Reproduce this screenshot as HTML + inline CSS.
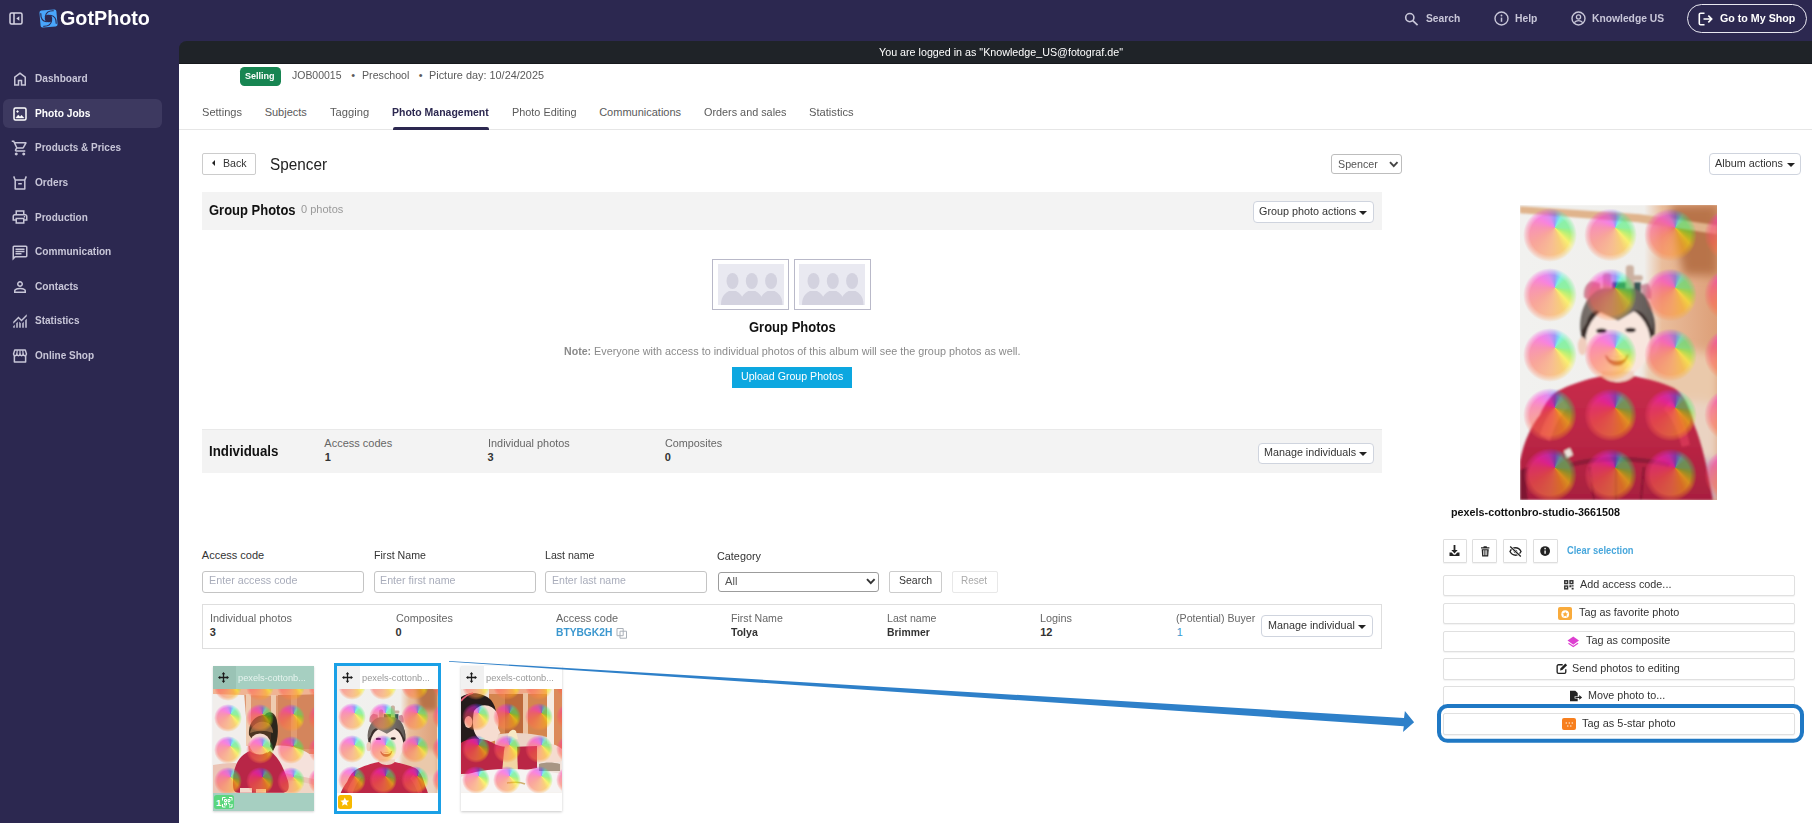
<!DOCTYPE html>
<html lang="en"><head><meta charset="utf-8"><title>GotPhoto - Photo Management</title>
<style>

*{box-sizing:border-box;margin:0;padding:0}
html,body{width:1812px;height:823px;overflow:hidden}
body{background:#2c2850;font-family:"Liberation Sans",sans-serif;position:relative}
.t{position:absolute;white-space:pre;line-height:1;transform-origin:0 50%;display:block}
.abs{position:absolute}
#main{position:absolute;left:179px;top:41px;width:1633px;height:782px;background:linear-gradient(to bottom,#1f2328 0,#1f2328 22px,#16191d 22px,#16191d 23px,#fff 23px);border-top-left-radius:7.5px;overflow:hidden}
.btn{position:absolute;background:#fff;border:1px solid #cfd4de;border-radius:4px}
.inp{position:absolute;background:#fff;border:1px solid #c4c4c4;border-radius:3px}
.bar{position:absolute;background:#f3f3f3}
.caret{position:absolute;width:0;height:0;border-left:4px solid transparent;border-right:4px solid transparent;border-top:4.4px solid #222;margin-left:-.4px}
svg{position:absolute;overflow:visible}


.ph{position:absolute;overflow:hidden}
.wm{position:absolute;display:block;border-radius:50%;background:conic-gradient(from 0deg at 59% 36.5%,#5848ff 0deg,#20a0ff 15deg,#20f0d0 30deg,#30f068 58deg,#38f060 90deg,#60f020 106deg,#b0f000 124deg,#fff000 138deg,#ffb010 160deg,#ff9040 190deg,#ff6050 235deg,#ff4080 270deg,#ff20d0 300deg,#d030f0 330deg,#8040f8 350deg,#5848ff 360deg);opacity:.52;
-webkit-mask-image:radial-gradient(circle closest-side,#000 74%,rgba(0,0,0,.5) 89%,transparent 100%);mask-image:radial-gradient(circle closest-side,#000 74%,rgba(0,0,0,.5) 89%,transparent 100%)}

</style></head>
<body>

<div id="main"></div>
<!-- sidebar active -->
<div class="abs" style="left:3px;top:99.2px;width:158.7px;height:28.6px;border-radius:6px;background:#3d3960"></div>
<!-- header -->
<div class="abs" style="left:239.8px;top:67px;width:41.2px;height:18.7px;border-radius:4.5px;background:#178552"></div>
<div class="abs" style="left:179px;top:129px;width:1633px;height:1px;background:#e6e6e6"></div>
<div class="abs" style="left:392.6px;top:126.6px;width:96.1px;height:3.2px;border-radius:2px 2px 0 0;background:#2c2850"></div>
<!-- back -->
<div class="btn" style="left:202px;top:153px;width:54px;height:22px;border-color:#ccc;border-radius:2px"></div>
<div class="abs" style="left:211.6px;top:160.2px;width:0;height:0;border-top:3.4px solid transparent;border-bottom:3.4px solid transparent;border-right:3.6px solid #222"></div>
<!-- spencer select -->
<div class="inp" style="left:1331.2px;top:154.1px;width:70.4px;height:19.6px;border-color:#bdbdbd"></div>
<svg style="left:1389px;top:161px" width="9.5" height="7" viewBox="0 0 9.5 7"><path d="M1 1.2 L4.75 5.2 L8.5 1.2" fill="none" stroke="#444" stroke-width="1.9"/></svg>
<!-- album actions -->
<div class="btn" style="left:1709px;top:153px;width:92px;height:22px"></div>
<div class="caret" style="left:1787px;top:162.6px"></div>
<!-- group bar -->
<div class="bar" style="left:202.2px;top:192.3px;width:1179.7px;height:37.5px"></div>
<div class="btn" style="left:1252.5px;top:201px;width:121.3px;height:22px"></div>
<div class="caret" style="left:1359.6px;top:210.6px"></div>
<!-- placeholders -->
<div class="abs" style="left:712.3px;top:259.1px;width:76.8px;height:51.4px;border:1px solid #b9b9c9;background:#fff"></div>
<div class="abs" style="left:717.5px;top:264.1px;width:66.3px;height:41.4px;background:#e9e9f1;overflow:hidden">
<svg style="left:0;top:0" width="66.3" height="41.4" viewBox="0 0 66.3 41.4"><g fill="#d3d2df"><g id="pp"><ellipse cx="14.5" cy="17" rx="6" ry="8"/><path d="M3 41.4 C3 31 8 29 11 27 L18 27 C21 29 26 31 26 41.4 Z"/></g><use href="#pp" x="19.3"/><use href="#pp" x="38.6"/></g></svg>
</div>
<div class="abs" style="left:794px;top:259.1px;width:76.8px;height:51.4px;border:1px solid #b9b9c9;background:#fff"></div>
<div class="abs" style="left:799.2px;top:264.1px;width:66.3px;height:41.4px;background:#e9e9f1;overflow:hidden">
<svg style="left:0;top:0" width="66.3" height="41.4" viewBox="0 0 66.3 41.4"><g fill="#d3d2df"><use href="#pp"/><use href="#pp" x="19.3"/><use href="#pp" x="38.6"/></g></svg>
</div>
<!-- upload -->
<div class="abs" style="left:732.1px;top:367.4px;width:119.9px;height:20.9px;background:#0ca7e0"></div>
<!-- individuals bar -->
<div class="bar" style="left:202.2px;top:429px;width:1179.7px;height:43.5px;border-top:1px solid #e9e9e9"></div>
<div class="btn" style="left:1257.5px;top:443px;width:116px;height:21px"></div>
<div class="caret" style="left:1359.5px;top:452.2px"></div>
<!-- filter inputs -->
<div class="inp" style="left:202.2px;top:571px;width:161.5px;height:22px"></div>
<div class="inp" style="left:374px;top:571px;width:161.8px;height:22px"></div>
<div class="inp" style="left:545.4px;top:571px;width:161.5px;height:22px"></div>
<div class="inp" style="left:717.9px;top:572.1px;width:161.3px;height:19.5px;border-color:#9c9c9c"></div>
<svg style="left:866px;top:578.4px" width="9.6" height="7" viewBox="0 0 9.6 7"><path d="M1 1.2 L4.8 5.2 L8.6 1.2" fill="none" stroke="#333" stroke-width="1.9"/></svg>
<div class="btn" style="left:889.1px;top:571px;width:52.5px;height:22px;border-color:#ccc;border-radius:2px"></div>
<div class="btn" style="left:951.9px;top:571px;width:45.7px;height:22px;border-color:#e8e8e8;border-radius:2px"></div>
<!-- individual row -->
<div class="abs" style="left:202px;top:604px;width:1180px;height:45px;border:1px solid #dedede;background:#fff"></div>
<div class="btn" style="left:1261.3px;top:615px;width:111.5px;height:22px"></div>
<div class="caret" style="left:1358.6px;top:624.5px"></div>
<svg style="left:616px;top:626.5px" width="12" height="12" viewBox="0 0 12 12"><path d="M1 1.5h6.2v7.2H1z M4 4.2h6.5v7H4z" fill="#fff" stroke="#aab0b8" stroke-width="1"/></svg>

<svg width="0" height="0" style="position:absolute"><defs>
<filter id="b1" x="-10%" y="-10%" width="120%" height="120%"><feGaussianBlur stdDeviation="1"/></filter>
<filter id="b05" x="-10%" y="-10%" width="120%" height="120%"><feGaussianBlur stdDeviation=".6"/></filter>
<filter id="b3" x="-20%" y="-20%" width="140%" height="140%"><feGaussianBlur stdDeviation="5"/></filter>
<linearGradient id="bgb" x1="0" x2="1" y1="0" y2="0"><stop offset="0" stop-color="#f1f1ef"/><stop offset=".630" stop-color="#f0efec"/><stop offset=".720" stop-color="#e9bd9c"/><stop offset="1" stop-color="#dd9f78"/></linearGradient>
<linearGradient id="hatg" x1="0" x2="1" y1="0" y2="0"><stop offset="0" stop-color="#6f6863"/><stop offset=".35" stop-color="#8a7f78"/><stop offset="1" stop-color="#5e5855"/></linearGradient>
<linearGradient id="dr" x1="0" x2="0" y1="0" y2="1"><stop offset="0" stop-color="#c82c4b"/><stop offset=".55" stop-color="#b92544"/><stop offset="1" stop-color="#a81f40"/></linearGradient>
<g id="boy">
<rect width="197.500" height="295" fill="url(#bgb)"/>
<g filter="url(#b3)">
<path d="M150 0h48v70h-34z" fill="#b8734a"/>
<path d="M126 150c20-10 50-8 72 2v60h-72z" fill="#eac9ab"/>
<path d="M150 200c15-6 35-4 48 0v95h-48z" fill="#ead3c2"/>
<path d="M170 255h28v40h-28z" fill="#c8a8c0"/>
</g>
<path d="M0 1L120 9 197.500 20V29L118 17 0 8Z" fill="#e0b48c" filter="url(#b1)"/>
<g filter="url(#b1)">
<path d="M62 134c-2-12-1-22 3-30h66c4 8 5 18 3 30l-4 6H66z" fill="#3a2f2b"/>
<ellipse cx="98" cy="137" rx="32.500" ry="35.500" fill="#f8e6de"/>
<ellipse cx="62.500" cy="141" rx="4.500" ry="9" fill="#f0cdbd"/><ellipse cx="134" cy="139.500" rx="4.500" ry="9" fill="#f0cdbd"/>
<path d="M92 77h29v10H92z" fill="#3b5755"/>
<path d="M64 92c-1-8 2-14 8-16l8 2 1 14-10 4z" fill="#c9909c"/>
<path d="M121 80l7-2c3 4 4 10 3 16l-8-2z" fill="#c9909c"/>
<rect x="83" y="68" width="8" height="17" rx="3" fill="#cbb0a0"/>
<rect x="106" y="60" width="8" height="26" rx="3" fill="#cbb0a0"/>
<rect x="112" y="70" width="11" height="5.500" rx="2.500" fill="#cbb0a0"/>
<path d="M60.700 127C58 104 70 85 84 83L112 83C126 85 136 102 133 126L129 118C126 110 121 106 116 105L98.200 115.500 76.800 105C72 106 68 111 66.600 118Z" fill="url(#hatg)"/>
<ellipse cx="81.500" cy="125.800" rx="5.200" ry="2.300" fill="#2a1d1c"/><ellipse cx="110.700" cy="124.900" rx="5.200" ry="2.300" fill="#2a1d1c"/>
<path d="M85 150c6 3 18 3 24-1-2 9-7 12-12 12s-10-3-12-11Z" fill="#b4524a"/>
<path d="M87.500 151c5 2 14 2 19-.5-1 3.500-4.500 5-9.500 5s-8.500-1.500-9.500-4.500Z" fill="#fff4e0"/>
<path d="M82 166h32v16H82z" fill="#f0d3c4"/>
<path d="M0 295V256c3-16 10-34 20-46 5-12 12-22 22-26 10-5 26-10 40-13 8 8 24 8 32 0 14 3 30 7 40 12 10 6 16 20 20 36 8 18 14 46 19 76Z" fill="url(#dr)"/>
<path d="M50 258c24-8 70-8 100 0l-1 4c-30-7-72-7-98 0z" fill="#8e1a38"/><path d="M20 230c4-14 12-28 22-36l6 8c-8 8-14 20-18 34z" fill="#d83a58"/><path d="M150 196c10 8 16 24 20 44l-8 2c-4-16-10-30-18-38z" fill="#d43655"/><path d="M8 262c-2 10-2 22 0 33H0v-30z" fill="#7e1530"/>
<path d="M70 262l4 33M96 258v37M124 262l-3 33" stroke="#8e1935" stroke-width="2.500" fill="none"/>
<path d="M44 246l6-3 3 7-6 3z" fill="#e9e4dc"/>
</g>
</g></defs></svg>
<svg style="left:8.5px;top:11.5px" width="14" height="13" viewBox="0 0 14 13"><rect x="1" y="1" width="12" height="11" rx="1.5" fill="none" stroke="#d6d4e2" stroke-width="1.5"/><path d="M5 1v11" stroke="#d6d4e2" stroke-width="1.5"/><path d="M10.300 4.200v4.600L7.300 6.500z" fill="#d6d4e2"/></svg>
<svg style="left:38.600px;top:8.800px" width="19" height="19" viewBox="0 0 38 38"><g transform="rotate(-5 19 19)"><rect x="2" y="2" width="34" height="34" rx="4" fill="#49a6fb"/>
<circle cx="19" cy="19" r="7.400" fill="#2c2850"/>
<g fill="none" stroke="#2c2850" stroke-width="2.200" stroke-linecap="round">
<path d="M13 14.500C15 7 22 3.500 30 4.500"/>
<path d="M23.500 13C31 15 34.500 22 33.500 30"/>
<path d="M25 23.500C23 31 16 34.500 8 33.500"/>
<path d="M14.500 25C7 23 3.500 16 4.500 8"/>
</g></g></svg>
<svg style="left:1404px;top:12px" width="15" height="14" viewBox="0 0 15 14"><circle cx="5.800" cy="5.600" r="4.100" fill="none" stroke="#c8c6d8" stroke-width="1.600"/><path d="M8.800 8.600l4.800 4.600" stroke="#c8c6d8" stroke-width="1.700"/></svg>
<svg style="left:1493.500px;top:11px" width="15" height="15" viewBox="0 0 15 15"><circle cx="7.500" cy="7.500" r="6.500" fill="none" stroke="#c8c6d8" stroke-width="1.400"/><path d="M7.500 6.600v4.200" stroke="#c8c6d8" stroke-width="1.500"/><circle cx="7.500" cy="4.500" r=".9" fill="#c8c6d8"/></svg>
<svg style="left:1570.600px;top:11px" width="15" height="15" viewBox="0 0 15 15"><circle cx="7.500" cy="7.500" r="6.500" fill="none" stroke="#c8c6d8" stroke-width="1.400"/><circle cx="7.500" cy="6" r="2.100" fill="none" stroke="#c8c6d8" stroke-width="1.300"/><path d="M3.300 11.700c1.200-1.500 2.600-2.100 4.200-2.100s3 .6 4.200 2.100" fill="none" stroke="#c8c6d8" stroke-width="1.300"/></svg>
<div class="abs" style="left:1686.900px;top:4px;width:120px;height:28.600px;border:1.500px solid #e8e7f0;border-radius:15px"></div>
<svg style="left:1697.500px;top:11.500px" width="15" height="14" viewBox="0 0 15 14"><path d="M6.500 1.200H2.600a1.300 1.300 0 0 0-1.300 1.300v9a1.300 1.300 0 0 0 1.300 1.300h3.900" fill="none" stroke="#fff" stroke-width="1.600"/><path d="M5.500 7h8M10.300 3.600L13.700 7l-3.400 3.400" fill="none" stroke="#fff" stroke-width="1.600"/></svg>
<svg style="left:11.00px;top:70.00px" width="18" height="18" viewBox="0 0 24 24"><path fill="#c8c6d8" d="M6 19h3v-6h6v6h3v-9l-6-4.5L6 10v9zm-2 2V9l8-6 8 6v12h-7v-6h-2v6H4z"/></svg>
<svg style="left:11.00px;top:104.60px" width="18" height="18" viewBox="0 0 24 24"><g fill="none" stroke="#ffffff" stroke-width="2" stroke-linejoin="round" stroke-linecap="butt"><rect x="4" y="4" width="16" height="16" rx="2"/><circle cx="8.7" cy="8.7" r="1.1" fill="#ffffff" stroke-width="1"/><path d="M6.5 17.2l3.2-4 2.3 2.8 2-2.4 3.4 3.6z" fill="#ffffff" stroke-width=".6"/></g></svg>
<svg style="left:10.50px;top:139.20px" width="18" height="18" viewBox="0 0 24 24"><path fill="#c8c6d8" d="M7 22q-.825 0-1.412-.587Q5 20.825 5 20q0-.825.588-1.413Q6.175 18 7 18t1.412.587Q9 19.175 9 20q0 .825-.588 1.413Q7.825 22 7 22Zm10 0q-.825 0-1.412-.587Q15 20.825 15 20q0-.825.588-1.413Q16.175 18 17 18t1.413.587Q19 19.175 19 20q0 .825-.587 1.413Q17.825 22 17 22ZM6.15 6l2.4 5h7l2.75-5ZM5.2 4h14.75q.575 0 .875.512.3.513.025 1.038l-3.55 6.4q-.275.5-.738.775Q16.1 13 15.55 13H8.1L7 15h12v2H7q-1.125 0-1.7-.988-.575-.987-.05-1.962L6.6 11.6 3 4H1V2h3.25Z"/></svg>
<svg style="left:11.00px;top:173.80px" width="18" height="18" viewBox="0 0 24 24"><g fill="none" stroke="#c8c6d8" stroke-width="2" stroke-linejoin="round" stroke-linecap="butt"><path d="M3.6 3.2L5.6 8V20H18.4V8L20.4 3.2M5.6 8H18.4M9.6 13h4.8"/></g></svg>
<svg style="left:11.00px;top:208.40px" width="18" height="18" viewBox="0 0 24 24"><path fill="#c8c6d8" d="M16 8V5H8v3H6V3h12v5ZM18 12.5q.425 0 .712-.288Q19 11.925 19 11.5t-.288-.713Q18.425 10.5 18 10.5t-.712.287Q17 11.075 17 11.5t.288.712q.287.288.712.288ZM16 19v-4H8v4Zm2 2H6v-4H2v-6q0-1.275.875-2.138Q3.75 8 5 8h14q1.275 0 2.138.862Q22 9.725 22 11v6h-4Zm2-6v-4q0-.425-.288-.713Q19.425 10 19 10H5q-.425 0-.713.287Q4 10.575 4 11v4h2v-2h12v2Z"/></svg>
<svg style="left:11.00px;top:243.60px" width="18" height="18" viewBox="0 0 24 24"><path fill="#c8c6d8" d="M6 14h8v-2H6Zm0-3h12V9H6Zm0-3h12V6H6ZM2 22V4q0-.825.587-1.413Q3.175 2 4 2h16q.825 0 1.413.587Q22 3.175 22 4v12q0 .825-.587 1.413Q20.825 18 20 18H6Zm3.15-6H20V4H4v13.125Z"/></svg>
<svg style="left:11.00px;top:277.60px" width="18" height="18" viewBox="0 0 24 24"><path fill="#c8c6d8" d="M12 12q-1.65 0-2.825-1.175Q8 9.65 8 8q0-1.65 1.175-2.825Q10.35 4 12 4q1.65 0 2.825 1.175Q16 6.35 16 8q0 1.65-1.175 2.825Q13.65 12 12 12Zm-8 8v-2.8q0-.85.438-1.563.437-.712 1.162-1.087 1.55-.775 3.15-1.163Q10.35 13 12 13t3.25.387q1.6.388 3.15 1.163.725.375 1.162 1.087Q20 16.35 20 17.2V20Zm2-2h12v-.8q0-.275-.137-.5-.138-.225-.363-.35-1.35-.675-2.725-1.013Q13.4 15 12 15t-2.775.337Q7.85 15.675 6.5 16.35q-.225.125-.362.35-.138.225-.138.5Zm6-8q.825 0 1.413-.588Q14 8.825 14 8t-.587-1.413Q12.825 6 12 6q-.825 0-1.412.587Q10 7.175 10 8q0 .825.588 1.412Q11.175 10 12 10Z"/></svg>
<svg style="left:11.00px;top:312.20px" width="18" height="18" viewBox="0 0 24 24"><path fill="#c8c6d8" d="M3 21v-2l2-2v4zm4 0v-6l2-2v8zm4 0v-8l2 2.025V21zm4 0v-5.975l2-2V21zm4 0V11l2-2v12zM3 15.825V13l7-7 4 4 7-7v2.825l-7 7-4-4z"/></svg>
<svg style="left:11.00px;top:346.80px" width="18" height="18" viewBox="0 0 24 24"><g fill="none" stroke="#c8c6d8" stroke-width="2" stroke-linejoin="round" stroke-linecap="butt"><path d="M4.5 11.5V20h15v-8.5"/><path d="M5 4h14l1.6 5.2c0 1.5-1.1 2.3-2.3 2.3s-2.1-.9-2.1-2.1c0 1.200-.9 2.100-2.100 2.100S12 10.600 12 9.400c0 1.200-.9 2.100-2.100 2.100s-2.100-.9-2.100-2.100c0 1.200-.9 2.100-2.100 2.100S3.400 10.700 3.400 9.200z"/><path d="M8.400 4.200L7.800 9.400M12 4.200v5.200M15.600 4.200l.6 5.200" stroke-width="1.6"/></g></svg>
<div class="abs" style="left:212.800px;top:666px;width:101px;height:145px;background:#a6cfc1;box-shadow:0 1px 2px rgba(0,0,0,.18)"></div>
<div class="abs" style="left:212.800px;top:666px;width:23.200px;height:23px;background:#9ac3b5"></div>
<svg style="left:217.9px;top:672.2px" width="11" height="11" viewBox="0 0 22 22"><path d="M11 0l3.600 4.400h-2.300v5.300h5.300V7.400L22 11l-4.400 3.600v-2.300h-5.300v5.300h2.300L11 22l-3.600-4.400h2.300v-5.300H4.400v2.300L0 11l4.400-3.600v2.300h5.300V4.400H7.400z" fill="#1c1c1c"/></svg>
<div class="ph" style="left:213px;top:689.2px;width:100.8px;height:103.7px"><svg style="left:0;top:0" width="100.8" height="103.7" viewBox="0 0 100.800 103.700" preserveAspectRatio="none">
<rect width="100.800" height="103.700" fill="#f1eeec"/>
<g filter="url(#b05)">
<path d="M31 3h70v62H36z" fill="#de9670"/>
<path d="M0 0h100.800v5L60 7 0 5z" fill="#f0b494"/>
<path d="M33 5h5v52h-5zM58 6h5v46h-5z" fill="#efcbb0"/>
<path d="M65 6h36v54H65z" fill="#d4855c"/>
<path d="M78 6h6v50h-6z" fill="#e09a72"/>
<path d="M56 58c14-4 32 0 45 10v36H40z" fill="#f5e1db"/>
<path d="M0 76c20-4 44-2 62 6l39 8v14H0z" fill="#ebc4b6"/>
<path d="M60 92c12-2 28 0 41 4v8H56z" fill="#f0d6c6"/>
<path d="M36 46c-1-12 6-20 16-20 3-5 11-3 12 6 2 10 1 22-4 30l-5-8c-7 2-14 0-19-8z" fill="#4d3522"/>
<path d="M54 28c4-4 9-2 10 6 1 10 0 20-4 27l-3-6c2-8 1-18-3-27z" fill="#2c261c"/>
<path d="M37 44c2-9 9-12 15-11 5 1 8 5 8 11-8-3-15-3-23 0z" fill="#8a6440"/>
<ellipse cx="47" cy="55" rx="10.500" ry="10.500" fill="#f6d9cf"/>
<path d="M20 92c0-14 6-26 17-30 4 4 14 5 20 0 9 6 14 18 18 30 2 8 0 11.700-6 11.700H26c-6 0-6-4-6-11.700z" fill="#b82646"/>
<path d="M27 99h12v4.700H27zM43 100h10v3.700H43z" fill="#f3dacd"/>
</g></svg><i class="wm" style="left:1.1px;top:-16.2px;width:28.0px;height:28.0px"></i><i class="wm" style="left:32.5px;top:-16.2px;width:28.0px;height:28.0px"></i><i class="wm" style="left:64.0px;top:-16.2px;width:28.0px;height:28.0px"></i><i class="wm" style="left:95.4px;top:-16.2px;width:28.0px;height:28.0px"></i><i class="wm" style="left:1.1px;top:15.2px;width:28.0px;height:28.0px"></i><i class="wm" style="left:32.5px;top:15.2px;width:28.0px;height:28.0px"></i><i class="wm" style="left:64.0px;top:15.2px;width:28.0px;height:28.0px"></i><i class="wm" style="left:95.4px;top:15.2px;width:28.0px;height:28.0px"></i><i class="wm" style="left:1.1px;top:46.7px;width:28.0px;height:28.0px"></i><i class="wm" style="left:32.5px;top:46.7px;width:28.0px;height:28.0px"></i><i class="wm" style="left:64.0px;top:46.7px;width:28.0px;height:28.0px"></i><i class="wm" style="left:95.4px;top:46.7px;width:28.0px;height:28.0px"></i><i class="wm" style="left:1.1px;top:78.1px;width:28.0px;height:28.0px"></i><i class="wm" style="left:32.5px;top:78.1px;width:28.0px;height:28.0px"></i><i class="wm" style="left:64.0px;top:78.1px;width:28.0px;height:28.0px"></i><i class="wm" style="left:95.4px;top:78.1px;width:28.0px;height:28.0px"></i></div>
<div class="abs" style="left:214.300px;top:794.900px;width:19.500px;height:14px;background:#5bd67e;border-radius:2.500px"></div>
<svg style="left:221.500px;top:797px" width="10.500" height="10.500" viewBox="0 0 21 21"><g fill="none" stroke="#fff" stroke-width="2"><path d="M1 7V1h6M14 1h6v6M20 14v6h-6M7 20H1v-6"/><path d="M5 5h4v4H5zM12 5h4v4h-4zM5 12h4v4H5zM12 12h2v2M16 14v2h-2"/></g></svg>
<div class="abs" style="left:334px;top:663px;width:106.600px;height:151.200px;background:#fff;border:3px solid #1aa0e6"></div>
<div class="abs" style="left:336.800px;top:666px;width:23px;height:23px;background:#f1f1f1"></div>
<svg style="left:342.2px;top:672.2px" width="11" height="11" viewBox="0 0 22 22"><path d="M11 0l3.600 4.400h-2.300v5.300h5.300V7.400L22 11l-4.400 3.600v-2.300h-5.300v5.300h2.300L11 22l-3.600-4.400h2.300v-5.300H4.400v2.300L0 11l4.400-3.600v2.300h5.300V4.400H7.400z" fill="#1c1c1c"/></svg>
<div class="ph" style="left:337.4px;top:689.2px;width:100.5px;height:103.7px"><svg style="left:0;top:-14.500px" width="100.3" height="149.9" viewBox="0 0 197.500 295"><use href="#boy"/></svg><i class="wm" style="left:0.5px;top:-17.2px;width:28.0px;height:28.0px"></i><i class="wm" style="left:31.9px;top:-17.2px;width:28.0px;height:28.0px"></i><i class="wm" style="left:63.4px;top:-17.2px;width:28.0px;height:28.0px"></i><i class="wm" style="left:94.8px;top:-17.2px;width:28.0px;height:28.0px"></i><i class="wm" style="left:0.5px;top:14.2px;width:28.0px;height:28.0px"></i><i class="wm" style="left:31.9px;top:14.2px;width:28.0px;height:28.0px"></i><i class="wm" style="left:63.4px;top:14.2px;width:28.0px;height:28.0px"></i><i class="wm" style="left:94.8px;top:14.2px;width:28.0px;height:28.0px"></i><i class="wm" style="left:0.5px;top:45.7px;width:28.0px;height:28.0px"></i><i class="wm" style="left:31.9px;top:45.7px;width:28.0px;height:28.0px"></i><i class="wm" style="left:63.4px;top:45.7px;width:28.0px;height:28.0px"></i><i class="wm" style="left:94.8px;top:45.7px;width:28.0px;height:28.0px"></i><i class="wm" style="left:0.5px;top:77.1px;width:28.0px;height:28.0px"></i><i class="wm" style="left:31.9px;top:77.1px;width:28.0px;height:28.0px"></i><i class="wm" style="left:63.4px;top:77.1px;width:28.0px;height:28.0px"></i><i class="wm" style="left:94.8px;top:77.1px;width:28.0px;height:28.0px"></i></div>
<div class="abs" style="left:337.900px;top:794.900px;width:14.500px;height:14.600px;background:#f7b900;border-radius:2.500px"></div>
<svg style="left:340.400px;top:797.300px" width="9.600" height="9.600" viewBox="0 0 20 20"><path d="M10 1l2.700 6 6.500.6-4.900 4.300 1.500 6.400L10 14.900 4.200 18.300l1.500-6.400L.8 7.600 7.300 7z" fill="#fff"/></svg>
<div class="abs" style="left:460.800px;top:666px;width:101.600px;height:145.200px;background:#fff;box-shadow:0 1px 2.500px rgba(0,0,0,.22)"></div>
<div class="abs" style="left:460.800px;top:666px;width:23px;height:23px;background:#f1f1f1"></div>
<svg style="left:466.3px;top:672.2px" width="11" height="11" viewBox="0 0 22 22"><path d="M11 0l3.600 4.400h-2.300v5.300h5.300V7.400L22 11l-4.400 3.600v-2.300h-5.300v5.300h2.300L11 22l-3.600-4.400h2.300v-5.300H4.400v2.300L0 11l4.400-3.600v2.300h5.300V4.400H7.400z" fill="#1c1c1c"/></svg>
<div class="ph" style="left:461.2px;top:689.2px;width:100.8px;height:103.7px"><svg style="left:0;top:0" width="100.8" height="103.7" viewBox="0 0 100.800 103.700" preserveAspectRatio="none">
<rect width="100.800" height="103.700" fill="#f0e2da"/>
<g filter="url(#b05)">
<path d="M28 0h73v56H28z" fill="#d4854f"/>
<path d="M28 0h73v5H28z" fill="#f0a888"/>
<path d="M44 5h18v44H44z" fill="#bd6a3a"/>
<path d="M62 4h5v50h-5z" fill="#ecc4a4"/>
<path d="M86 0h7v62h-7z" fill="#f6ece2"/>
<path d="M93 0h8v60h-8z" fill="#dc8a5a"/>
<path d="M34 46c12-3 34-3 52 2v16H34z" fill="#ecd4c6"/>
<path d="M0 8c8-6 22-5 30 3 6 8 7 18 3 28l-8 16H0z" fill="#271c1c"/>
<path d="M0 12c4-5 8-7 12-8" fill="none" stroke="#e8607a" stroke-width="1.800"/>
<path d="M13 22c6-9 19-7 23 2 2 5 2 11 1 15l2.500 5-2.500 2c0 5-4 7-10 7-9 0-15-8-15-18 0-5 0-9 1-13z" fill="#f6ddd1"/>
<ellipse cx="7.500" cy="33" rx="4" ry="6" fill="#f1cdbe"/>
<path d="M0 54c6-5 20-6 30-1 6 4 12 5 20 5l26-1v22c-20 4-40 5-76 6z" fill="#ba2645"/>
<path d="M76 58c8-5 18-4 25 2v12c-8 3-18 1-25-3z" fill="#f5dccf"/>
<path d="M43 62c1-8 4-13 8-16 3 2 4 6 5 12l1 26H41z" fill="#f1d5a4"/>
<path d="M47 46c1-4 5-7 8-4l2 8-10 2z" fill="#f7e8c4"/>
<path d="M0 88c20-10 60-10 100.800-3v18.700H0z" fill="#f6f4f3"/>
<path d="M78 75c6-2 14-2 21 0v7H78z" fill="#a89684"/>
<path d="M46 94c6-1 14-1 18 1" stroke="#d0b070" stroke-width="1.500" fill="none"/>
</g></svg><i class="wm" style="left:0.7px;top:-17.2px;width:28.0px;height:28.0px"></i><i class="wm" style="left:32.1px;top:-17.2px;width:28.0px;height:28.0px"></i><i class="wm" style="left:63.6px;top:-17.2px;width:28.0px;height:28.0px"></i><i class="wm" style="left:95.0px;top:-17.2px;width:28.0px;height:28.0px"></i><i class="wm" style="left:0.7px;top:14.2px;width:28.0px;height:28.0px"></i><i class="wm" style="left:32.1px;top:14.2px;width:28.0px;height:28.0px"></i><i class="wm" style="left:63.6px;top:14.2px;width:28.0px;height:28.0px"></i><i class="wm" style="left:95.0px;top:14.2px;width:28.0px;height:28.0px"></i><i class="wm" style="left:0.7px;top:45.7px;width:28.0px;height:28.0px"></i><i class="wm" style="left:32.1px;top:45.7px;width:28.0px;height:28.0px"></i><i class="wm" style="left:63.6px;top:45.7px;width:28.0px;height:28.0px"></i><i class="wm" style="left:95.0px;top:45.7px;width:28.0px;height:28.0px"></i><i class="wm" style="left:0.7px;top:77.1px;width:28.0px;height:28.0px"></i><i class="wm" style="left:32.1px;top:77.1px;width:28.0px;height:28.0px"></i><i class="wm" style="left:63.6px;top:77.1px;width:28.0px;height:28.0px"></i><i class="wm" style="left:95.0px;top:77.1px;width:28.0px;height:28.0px"></i></div>
<div class="ph" style="left:1519.5px;top:205.3px;width:197.3px;height:295.2px"><svg style="left:0;top:0" width="197.3" height="295.2" viewBox="0 0 197.500 295"><use href="#boy"/></svg><i class="wm" style="left:3.9px;top:2.7px;width:53.6px;height:53.6px"></i><i class="wm" style="left:64.0px;top:2.7px;width:53.6px;height:53.6px"></i><i class="wm" style="left:124.1px;top:2.7px;width:53.6px;height:53.6px"></i><i class="wm" style="left:184.2px;top:2.7px;width:53.6px;height:53.6px"></i><i class="wm" style="left:3.9px;top:62.8px;width:53.6px;height:53.6px"></i><i class="wm" style="left:64.0px;top:62.8px;width:53.6px;height:53.6px"></i><i class="wm" style="left:124.1px;top:62.8px;width:53.6px;height:53.6px"></i><i class="wm" style="left:184.2px;top:62.8px;width:53.6px;height:53.6px"></i><i class="wm" style="left:3.9px;top:122.9px;width:53.6px;height:53.6px"></i><i class="wm" style="left:64.0px;top:122.9px;width:53.6px;height:53.6px"></i><i class="wm" style="left:124.1px;top:122.9px;width:53.6px;height:53.6px"></i><i class="wm" style="left:184.2px;top:122.9px;width:53.6px;height:53.6px"></i><i class="wm" style="left:3.9px;top:183.0px;width:53.6px;height:53.6px"></i><i class="wm" style="left:64.0px;top:183.0px;width:53.6px;height:53.6px"></i><i class="wm" style="left:124.1px;top:183.0px;width:53.6px;height:53.6px"></i><i class="wm" style="left:184.2px;top:183.0px;width:53.6px;height:53.6px"></i><i class="wm" style="left:3.9px;top:243.1px;width:53.6px;height:53.6px"></i><i class="wm" style="left:64.0px;top:243.1px;width:53.6px;height:53.6px"></i><i class="wm" style="left:124.1px;top:243.1px;width:53.6px;height:53.6px"></i><i class="wm" style="left:184.2px;top:243.1px;width:53.6px;height:53.6px"></i></div>
<div class="btn" style="left:1442.5px;top:539.200px;width:24.0px;height:23.500px;border-color:#dedede;border-radius:1px;box-shadow:0 1px 1px rgba(0,0,0,.05)"></div>
<div class="btn" style="left:1472.4px;top:539.200px;width:24.6px;height:23.500px;border-color:#dedede;border-radius:1px;box-shadow:0 1px 1px rgba(0,0,0,.05)"></div>
<div class="btn" style="left:1503.1px;top:539.200px;width:23.8px;height:23.500px;border-color:#dedede;border-radius:1px;box-shadow:0 1px 1px rgba(0,0,0,.05)"></div>
<div class="btn" style="left:1533px;top:539.200px;width:24.6px;height:23.500px;border-color:#dedede;border-radius:1px;box-shadow:0 1px 1px rgba(0,0,0,.05)"></div>
<svg style="left:1449px;top:545px" width="11" height="12" viewBox="0 0 11 12"><path d="M4.600 0h1.800v5h2.300L5.500 8.400 2.300 5h2.300z" fill="#222"/><path d="M.5 7.600v3.400h10V7.600H8.300l-1.600 1.700c-.7.700-1.700.7-2.400 0L2.700 7.600z" fill="#222"/></svg>
<svg style="left:1480.500px;top:545.500px" width="8.400" height="10.800" viewBox="0 0 10 12"><path d="M3.300 0h3.400l.5 1H10v1.500H0V1h2.800z" fill="#222"/><path d="M.8 3.300h8.400L8.600 12H1.400z" fill="#222"/><path d="M3.200 4.600v6M5 4.600v6M6.800 4.600v6" stroke="#fff" stroke-width="1"/></svg>
<svg style="left:1508.500px;top:545.500px" width="13" height="11" viewBox="0 0 13 11"><path d="M1 5.500C2.300 3 4.200 1.800 6.500 1.800S10.700 3 12 5.500C10.700 8 8.800 9.200 6.500 9.200S2.300 8 1 5.500Z" fill="none" stroke="#222" stroke-width="1.400"/><circle cx="6.500" cy="5.500" r="1.800" fill="#222"/><path d="M1.200.6l10.600 9.800" stroke="#fff" stroke-width="2.600"/><path d="M1.200.6l10.600 9.800" stroke="#222" stroke-width="1.300"/></svg>
<svg style="left:1540.300px;top:545.500px" width="10.200" height="10.200" viewBox="0 0 11 11"><circle cx="5.500" cy="5.500" r="5.300" fill="#222"/><path d="M5.500 4.800v3.600" stroke="#fff" stroke-width="1.500"/><circle cx="5.500" cy="2.900" r=".9" fill="#fff"/></svg>
<div class="btn" style="left:1442.500px;top:574.7px;width:352.100px;height:21.800px;border-color:#e0e0e0;border-radius:2px;box-shadow:0 1px 1px rgba(0,0,0,.05)"></div>
<div class="btn" style="left:1442.500px;top:602.7px;width:352.100px;height:21.800px;border-color:#e0e0e0;border-radius:2px;box-shadow:0 1px 1px rgba(0,0,0,.05)"></div>
<div class="btn" style="left:1442.500px;top:630.6px;width:352.100px;height:21.800px;border-color:#e0e0e0;border-radius:2px;box-shadow:0 1px 1px rgba(0,0,0,.05)"></div>
<div class="btn" style="left:1442.500px;top:658.3px;width:352.100px;height:21.800px;border-color:#e0e0e0;border-radius:2px;box-shadow:0 1px 1px rgba(0,0,0,.05)"></div>
<div class="btn" style="left:1442.500px;top:685.7px;width:352.100px;height:21.800px;border-color:#e0e0e0;border-radius:2px;box-shadow:0 1px 1px rgba(0,0,0,.05)"></div>
<div class="btn" style="left:1442.500px;top:713.1px;width:352.100px;height:21.800px;border-color:#e0e0e0;border-radius:2px;box-shadow:0 1px 1px rgba(0,0,0,.05)"></div>
<svg style="left:1564.300px;top:580.300px" width="9.600" height="9.600" viewBox="0 0 10 10"><g fill="none" stroke="#333" stroke-width="1.500"><rect x=".8" y=".8" width="2.900" height="2.900"/><rect x="6.300" y=".8" width="2.900" height="2.900"/><rect x=".8" y="6.300" width="2.900" height="2.900"/></g><path d="M5.600 5.600h2v2h-2zM8 8h2v2H8z M8 5.600h2v1.200H8z" fill="#333"/></svg>
<div class="abs" style="left:1557.900px;top:607.400px;width:14.500px;height:12.400px;background:#f9ab3c;border-radius:2px"></div>
<svg style="left:1561px;top:609.500px" width="8.400" height="8.400" viewBox="0 0 10 10"><circle cx="5" cy="5" r="4.600" fill="#fff"/><path d="M5 1.800l1 2.100 2.300.3-1.700 1.600.4 2.300L5 7l-2 1.100.4-2.300L1.700 4.200 4 3.900z" fill="#f9ab3c"/></svg>
<svg style="left:1567px;top:635.500px" width="12.500" height="12.500" viewBox="0 0 12 12"><path d="M6 .5L11.500 4.400 6 8.300.5 4.400z" fill="#dd3fd0"/><path d="M1.400 6.900L6 10.100l4.600-3.200" fill="none" stroke="#dd3fd0" stroke-width="1.100"/></svg>
<svg style="left:1555.700px;top:662.800px" width="11.500" height="11.500" viewBox="0 0 12 12"><path d="M7 1.800H2.600A1.400 1.400 0 0 0 1.200 3.200v6.200a1.400 1.400 0 0 0 1.400 1.400h6.200a1.400 1.400 0 0 0 1.400-1.400V6.400" fill="none" stroke="#222" stroke-width="1.400"/><path d="M9.700.4l1.900 1.900-5 5-2.400.6.600-2.500z" fill="#222"/></svg>
<svg style="left:1570px;top:690px" width="12.500" height="12" viewBox="0 0 13 12"><path d="M0 .5h5.500L8 3v3.300H4.800v2.200H8v3H0z" fill="#222"/><path d="M5.600 6.900h4V5l3 2.500-3 2.500V8.100h-4z" fill="#222"/></svg>
<div class="abs" style="left:1561.800px;top:717.800px;width:14.600px;height:12.600px;background:#f77f1e;border-radius:2px"></div>
<svg style="left:1561.800px;top:717.800px" width="14.600" height="12.600" viewBox="0 0 14.600 12.600"><g fill="#ffe6cc"><circle cx="4.300" cy="5" r=".8"/><circle cx="7.300" cy="5" r=".8"/><circle cx="10.300" cy="5" r=".8"/><circle cx="5.800" cy="8" r=".8"/><circle cx="8.800" cy="8" r=".8"/></g></svg>
<svg style="left:0;top:0" width="1812" height="823" viewBox="0 0 1812 823"><rect x="1439" y="706.100" width="363" height="34.700" rx="8.500" fill="none" stroke="#1f78c4" stroke-width="4"/><path d="M449 661L1404 718L1404.900 711.100L1414.100 722.300L1403 732.100L1403.800 726.200L449 661.700Z" fill="#2e80c9"/></svg>
<div id="texts">
<span class="t" style="left:60.00px;top:8px;font-size:20px;font-weight:700;color:#ffffff;transform:scaleX(0.9869);">GotPhoto</span>
<span class="t" style="left:34.77px;top:73px;font-size:11px;font-weight:700;color:#c8c6d8;transform:scaleX(0.9170);">Dashboard</span>
<span class="t" style="left:34.77px;top:108px;font-size:11px;font-weight:700;color:#ffffff;transform:scaleX(0.9267);">Photo Jobs</span>
<span class="t" style="left:34.77px;top:142px;font-size:11px;font-weight:700;color:#c8c6d8;transform:scaleX(0.9075);">Products &amp; Prices</span>
<span class="t" style="left:34.77px;top:177px;font-size:11px;font-weight:700;color:#c8c6d8;transform:scaleX(0.9202);">Orders</span>
<span class="t" style="left:34.77px;top:212px;font-size:11px;font-weight:700;color:#c8c6d8;transform:scaleX(0.9094);">Production</span>
<span class="t" style="left:34.77px;top:246px;font-size:11px;font-weight:700;color:#c8c6d8;transform:scaleX(0.9179);">Communication</span>
<span class="t" style="left:34.77px;top:281px;font-size:11px;font-weight:700;color:#c8c6d8;transform:scaleX(0.9243);">Contacts</span>
<span class="t" style="left:34.77px;top:315px;font-size:11px;font-weight:700;color:#c8c6d8;transform:scaleX(0.9096);">Statistics</span>
<span class="t" style="left:34.77px;top:350px;font-size:11px;font-weight:700;color:#c8c6d8;transform:scaleX(0.9123);">Online Shop</span>
<span class="t" style="left:1426.27px;top:13px;font-size:11px;font-weight:700;color:#c8c6d8;transform:scaleX(0.9345);">Search</span>
<span class="t" style="left:1515.47px;top:13px;font-size:11px;font-weight:700;color:#c8c6d8;transform:scaleX(0.9394);">Help</span>
<span class="t" style="left:1592.27px;top:13px;font-size:11px;font-weight:700;color:#c8c6d8;transform:scaleX(0.9362);">Knowledge US</span>
<span class="t" style="left:1719.67px;top:13px;font-size:11px;font-weight:700;color:#ffffff;transform:scaleX(0.9715);">Go to My Shop</span>
<span class="t" style="left:879.48px;top:47px;font-size:10.5px;font-weight:400;color:#ffffff;transform:scaleX(1.0210);">You are logged in as &quot;Knowledge_US@fotograf.de&quot;</span>
<span class="t" style="left:245.31px;top:71px;font-size:9.5px;font-weight:700;color:#ffffff;transform:scaleX(0.9501);">Selling</span>
<span class="t" style="left:292.47px;top:70px;font-size:11px;font-weight:400;color:#5a5a5a;transform:scaleX(0.9522);">JOB00015</span>
<span class="t" style="left:351.17px;top:70px;font-size:11px;font-weight:400;color:#5a5a5a;">•</span>
<span class="t" style="left:362.07px;top:70px;font-size:11px;font-weight:400;color:#5a5a5a;transform:scaleX(0.9689);">Preschool</span>
<span class="t" style="left:418.67px;top:70px;font-size:11px;font-weight:400;color:#5a5a5a;">•</span>
<span class="t" style="left:429.17px;top:70px;font-size:11px;font-weight:400;color:#5a5a5a;transform:scaleX(0.9896);">Picture day: 10/24/2025</span>
<span class="t" style="left:201.87px;top:107px;font-size:11px;font-weight:400;color:#5a5a5a;transform:scaleX(1.0063);">Settings</span>
<span class="t" style="left:264.67px;top:107px;font-size:11px;font-weight:400;color:#5a5a5a;">Subjects</span>
<span class="t" style="left:330.27px;top:107px;font-size:11px;font-weight:400;color:#5a5a5a;transform:scaleX(1.0143);">Tagging</span>
<span class="t" style="left:392.27px;top:107px;font-size:11px;font-weight:700;color:#2c2850;transform:scaleX(0.9531);">Photo Management</span>
<span class="t" style="left:511.77px;top:107px;font-size:11px;font-weight:400;color:#5a5a5a;transform:scaleX(0.9872);">Photo Editing</span>
<span class="t" style="left:599.17px;top:107px;font-size:11px;font-weight:400;color:#5a5a5a;">Communications</span>
<span class="t" style="left:703.67px;top:107px;font-size:11px;font-weight:400;color:#5a5a5a;transform:scaleX(0.9849);">Orders and sales</span>
<span class="t" style="left:809.37px;top:107px;font-size:11px;font-weight:400;color:#5a5a5a;transform:scaleX(1.0155);">Statistics</span>
<span class="t" style="left:222.57px;top:158px;font-size:11px;font-weight:400;color:#333333;transform:scaleX(0.9686);">Back</span>
<span class="t" style="left:270.12px;top:157px;font-size:16px;font-weight:400;color:#222222;transform:scaleX(0.9565);">Spencer</span>
<span class="t" style="left:1338.47px;top:159px;font-size:11px;font-weight:400;color:#555555;transform:scaleX(0.9735);">Spencer</span>
<span class="t" style="left:1715.37px;top:158px;font-size:11px;font-weight:400;color:#333333;transform:scaleX(0.9842);">Album actions</span>
<span class="t" style="left:209.08px;top:203px;font-size:14px;font-weight:700;color:#111111;transform:scaleX(0.9279);">Group Photos</span>
<span class="t" style="left:301.29px;top:204px;font-size:10.5px;font-weight:400;color:#999999;transform:scaleX(1.0497);">0 photos</span>
<span class="t" style="left:1258.97px;top:206px;font-size:11px;font-weight:400;color:#333333;transform:scaleX(0.9810);">Group photo actions</span>
<span class="t" style="left:748.58px;top:320px;font-size:14px;font-weight:700;color:#111111;transform:scaleX(0.9290);">Group Photos</span>
<span class="t" style="left:741.07px;top:371px;font-size:11px;font-weight:400;color:#ffffff;transform:scaleX(0.9660);">Upload Group Photos</span>
<span class="t" style="left:208.98px;top:444px;font-size:14px;font-weight:700;color:#111111;transform:scaleX(0.9491);">Individuals</span>
<span class="t" style="left:324.37px;top:438px;font-size:11px;font-weight:400;color:#666666;">Access codes</span>
<span class="t" style="left:324.67px;top:452px;font-size:11px;font-weight:700;color:#333333;">1</span>
<span class="t" style="left:487.57px;top:438px;font-size:11px;font-weight:400;color:#666666;transform:scaleX(0.9896);">Individual photos</span>
<span class="t" style="left:487.57px;top:452px;font-size:11px;font-weight:700;color:#333333;">3</span>
<span class="t" style="left:664.77px;top:438px;font-size:11px;font-weight:400;color:#666666;transform:scaleX(0.9832);">Composites</span>
<span class="t" style="left:664.77px;top:452px;font-size:11px;font-weight:700;color:#333333;">0</span>
<span class="t" style="left:1264.07px;top:447px;font-size:11px;font-weight:400;color:#333333;transform:scaleX(0.9780);">Manage individuals</span>
<span class="t" style="left:201.87px;top:550px;font-size:11px;font-weight:400;color:#333333;">Access code</span>
<span class="t" style="left:373.67px;top:550px;font-size:11px;font-weight:400;color:#333333;transform:scaleX(0.9650);">First Name</span>
<span class="t" style="left:545.37px;top:550px;font-size:11px;font-weight:400;color:#333333;transform:scaleX(0.9635);">Last name</span>
<span class="t" style="left:717.17px;top:551px;font-size:11px;font-weight:400;color:#333333;transform:scaleX(0.9856);">Category</span>
<span class="t" style="left:209.07px;top:575px;font-size:11px;font-weight:400;color:#a9adbb;transform:scaleX(0.9779);">Enter access code</span>
<span class="t" style="left:380.47px;top:575px;font-size:11px;font-weight:400;color:#a9adbb;transform:scaleX(0.9724);">Enter first name</span>
<span class="t" style="left:552.27px;top:575px;font-size:11px;font-weight:400;color:#a9adbb;transform:scaleX(0.9579);">Enter last name</span>
<span class="t" style="left:725.37px;top:576px;font-size:11px;font-weight:400;color:#555555;transform:scaleX(1.0135);">All</span>
<span class="t" style="left:899.07px;top:575px;font-size:11px;font-weight:400;color:#333333;transform:scaleX(0.9524);">Search</span>
<span class="t" style="left:961.47px;top:575px;font-size:11px;font-weight:400;color:#aaaaaa;transform:scaleX(0.9043);">Reset</span>
<span class="t" style="left:209.77px;top:613px;font-size:11px;font-weight:400;color:#666666;transform:scaleX(0.9932);">Individual photos</span>
<span class="t" style="left:209.77px;top:627px;font-size:11px;font-weight:700;color:#333333;">3</span>
<span class="t" style="left:395.57px;top:613px;font-size:11px;font-weight:400;color:#666666;transform:scaleX(0.9814);">Composites</span>
<span class="t" style="left:395.57px;top:627px;font-size:11px;font-weight:700;color:#333333;">0</span>
<span class="t" style="left:556.37px;top:613px;font-size:11px;font-weight:400;color:#666666;transform:scaleX(0.9956);">Access code</span>
<span class="t" style="left:556.37px;top:627px;font-size:11px;font-weight:700;color:#3b97cf;transform:scaleX(0.9303);">BTYBGK2H</span>
<span class="t" style="left:731.07px;top:613px;font-size:11px;font-weight:400;color:#666666;transform:scaleX(0.9632);">First Name</span>
<span class="t" style="left:731.07px;top:627px;font-size:11px;font-weight:700;color:#333333;transform:scaleX(0.9598);">Tolya</span>
<span class="t" style="left:886.77px;top:613px;font-size:11px;font-weight:400;color:#666666;transform:scaleX(0.9635);">Last name</span>
<span class="t" style="left:886.77px;top:627px;font-size:11px;font-weight:700;color:#333333;transform:scaleX(0.9436);">Brimmer</span>
<span class="t" style="left:1040.17px;top:613px;font-size:11px;font-weight:400;color:#666666;transform:scaleX(0.9870);">Logins</span>
<span class="t" style="left:1040.17px;top:627px;font-size:11px;font-weight:700;color:#333333;">12</span>
<span class="t" style="left:1176.47px;top:613px;font-size:11px;font-weight:400;color:#666666;transform:scaleX(0.9666);">(Potential) Buyer</span>
<span class="t" style="left:1176.67px;top:627px;font-size:11px;font-weight:400;color:#3b97cf;">1</span>
<span class="t" style="left:1268.17px;top:620px;font-size:11px;font-weight:400;color:#333333;transform:scaleX(0.9789);">Manage individual</span>
<span class="t" style="left:238.12px;top:673px;font-size:9.5px;font-weight:400;color:#e6f3ee;transform:scaleX(0.9739);">pexels-cottonb...</span>
<span class="t" style="left:362.21px;top:673px;font-size:9.5px;font-weight:400;color:#999999;transform:scaleX(0.9739);">pexels-cottonb...</span>
<span class="t" style="left:486.41px;top:673px;font-size:9.5px;font-weight:400;color:#999999;transform:scaleX(0.9739);">pexels-cottonb...</span>
<span class="t" style="left:216.02px;top:798px;font-size:9.5px;font-weight:700;color:#ffffff;">1</span>
<span class="t" style="left:1451.09px;top:507px;font-size:10.5px;font-weight:700;color:#111111;transform:scaleX(1.0277);">pexels-cottonbro-studio-3661508</span>
<span class="t" style="left:1567.40px;top:546px;font-size:10px;font-weight:700;color:#48a7dc;transform:scaleX(0.9360);">Clear selection</span>
<span class="t" style="left:1579.97px;top:579px;font-size:11px;font-weight:400;color:#333333;transform:scaleX(0.9833);">Add access code...</span>
<span class="t" style="left:1578.57px;top:607px;font-size:11px;font-weight:400;color:#333333;transform:scaleX(0.9821);">Tag as favorite photo</span>
<span class="t" style="left:1586.37px;top:635px;font-size:11px;font-weight:400;color:#333333;transform:scaleX(0.9835);">Tag as composite</span>
<span class="t" style="left:1572.07px;top:663px;font-size:11px;font-weight:400;color:#333333;transform:scaleX(0.9837);">Send photos to editing</span>
<span class="t" style="left:1588.07px;top:690px;font-size:11px;font-weight:400;color:#333333;transform:scaleX(0.9786);">Move photo to...</span>
<span class="t" style="left:1581.57px;top:718px;font-size:11px;font-weight:400;color:#333333;transform:scaleX(0.9950);">Tag as 5-star photo</span>
<span class="t" style="left:563.58px;top:346px;font-size:10.5px;font-weight:700;color:#8a8a8a;transform:scaleX(1.0095);">Note:</span>
<span class="t" style="left:593.68px;top:346px;font-size:10.5px;font-weight:400;color:#8a8a8a;transform:scaleX(1.0307);">Everyone with access to individual photos of this album will see the group photos as well.</span>
</div>
</body></html>
